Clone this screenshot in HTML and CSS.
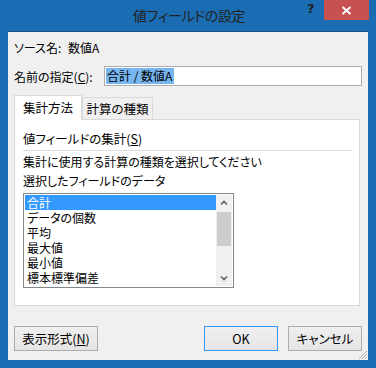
FILE: index.html
```html
<!DOCTYPE html>
<html lang="ja">

<head>
    <meta charset="UTF-8">
    <title>値フィールドの設定</title>
    <link rel="stylesheet" href="styles.css">
</head>

<body>
    <div class="window">
        <div class="titlebar">
            <span class="title">値フィールドの設定</span>
            <span class="help">?</span>
            <span class="close">
                <svg width="11" height="9" viewBox="0 0 11 9">
                    <path d="M1.5 1 L9.5 8 M9.5 1 L1.5 8" stroke="#fff" stroke-width="2"/>
                </svg>
            </span>
        </div>

        <div class="client">
            <div class="source-row">
                <span class="source-label">ソース名:</span>
                <span>数値A</span>
            </div>

            <div class="name-row">
                <label class="name-label" for="customName">名前の指定(<u>C</u>):</label>
                <div class="name-input" id="customName"><span class="sel">合計 / 数値A</span></div>
            </div>

            <div class="tabs">
                <div class="tab active">集計方法</div>
                <div class="tab">計算の種類</div>
            </div>

            <div class="panel">
                <div class="group-title">値フィールドの集計(<u>S</u>)</div>
                <div class="separator"></div>
                <div class="hint">集計に使用する計算の種類を選択してください</div>
                <div class="hint">選択したフィールドのデータ</div>

                <div class="listbox">
                    <ul class="items">
                        <li class="selected">合計</li>
                        <li>データの個数</li>
                        <li>平均</li>
                        <li>最大値</li>
                        <li>最小値</li>
                        <li>標本標準偏差</li>
                    </ul>
                    <div class="scrollbar">
                        <svg class="arrow" width="16" height="16" viewBox="0 0 16 16">
                            <path d="M5 9.5 L8 6.5 L11 9.5" fill="none" stroke="#606060" stroke-width="1.6"/>
                        </svg>
                        <div class="track">
                            <div class="thumb"></div>
                        </div>
                        <svg class="arrow" width="16" height="16" viewBox="0 0 16 16">
                            <path d="M5 6.5 L8 9.5 L11 6.5" fill="none" stroke="#606060" stroke-width="1.6"/>
                        </svg>
                    </div>
                </div>
            </div>

            <div class="buttons">
                <button class="btn">表示形式(<u>N</u>)</button>
                <div class="spacer"></div>
                <button class="btn default">OK</button>
                <button class="btn">キャンセル</button>
            </div>

            <svg class="grip" width="10" height="10" viewBox="0 0 10 10">
                <path d="M9 1 L1 9 M9 4 L4 9 M9 7 L7 9" stroke="#b0b0b0" stroke-width="1"/>
            </svg>
        </div>
    </div>
</body>

</html>
```

FILE: styles.css
```css
body {
    margin: 0;
    padding: 0;
    font-family: "Noto Sans CJK JP", "Noto Sans", sans-serif;
    font-size: 12px;
    font-feature-settings: "palt";
    color: #000;
}

.window {
    width: 376px;
    height: 368px;
    background-color: #1b6db3;
    overflow: hidden;
}

.titlebar {
    height: 31px;
    display: flex;
    align-items: flex-start;
}

.title {
    margin-left: 133px;
    margin-top: 5px;
    width: 160px;
    font-size: 14px;
    color: #222;
    letter-spacing: -0.4px;
}

.help {
    margin-left: 14px;
    margin-top: 1px;
    width: 17px;
    font-family: "DejaVu Sans", sans-serif;
    font-size: 13px;
    font-weight: bold;
    color: #222;
}

.close {
    width: 45px;
    height: 20px;
    background-color: #c75050;
    display: flex;
    align-items: center;
    justify-content: center;
}

.client {
    position: relative;
    margin-left: 8px;
    width: 360px;
    height: 329px;
    box-sizing: border-box;
    border-top: 1px solid #15558c;
    background-color: #f0f0f0;
    padding: 7px 6px 0 6px;
}

.source-row {
    height: 18px;
    line-height: 18px;
    display: flex;
}

.source-label {
    width: 54px;
}

.name-row {
    margin-top: 9px;
    display: flex;
    align-items: center;
    height: 20px;
}

.name-label {
    width: 90px;
}

.name-input {
    width: 258px;
    height: 20px;
    box-sizing: border-box;
    border: 1px solid #abadb3;
    background-color: #fff;
    padding: 1px 1px;
    line-height: 16px;
}

.sel {
    display: inline-block;
    background-color: #78b6f0;
    padding: 0 2px 0 1px;
}

.tabs {
    margin-top: 9px;
    display: flex;
    align-items: flex-end;
    height: 24px;
    position: relative;
    z-index: 1;
}

.tab {
    width: 71px;
    height: 22px;
    box-sizing: border-box;
    border: 1px solid #d9d9d9;
    border-bottom: none;
    background-color: #f0f0f0;
    text-align: center;
    line-height: 22px;
    font-size: 12.5px;
}

.tab.active {
    width: 68px;
    height: 25px;
    margin-bottom: -1px;
    background-color: #fff;
    border-color: #d9d9d9;
    line-height: 24px;
}

.panel {
    width: 346px;
    height: 187px;
    box-sizing: border-box;
    border: 1px solid #d9d9d9;
    background-color: #fff;
    padding: 10px 7px 0 8px;
}

.group-title {
    line-height: 17px;
    height: 17px;
    font-size: 12.5px;
}

.separator {
    margin-top: 3px;
    height: 1px;
    background-color: #dcdcdc;
}

.hint {
    margin-top: 2px;
    line-height: 17px;
    height: 17px;
}

.hint + .hint {
    margin-top: 2px;
}

.listbox {
    margin-top: 4px;
    width: 211px;
    height: 95px;
    box-sizing: border-box;
    border: 1px solid #828790;
    background-color: #fff;
    display: flex;
    padding: 1px;
}

.items {
    list-style: none;
    margin: 0;
    padding: 0;
    flex: 1;
}

.items li {
    height: 15px;
    line-height: 15px;
    padding-left: 2px;
    font-size: 12px;
}

.items li.selected {
    background-color: #3399ff;
    color: #fff;
}

.scrollbar {
    width: 16px;
    display: flex;
    flex-direction: column;
    background-color: #f0f0f0;
}

.arrow {
    display: block;
}

.track {
    flex: 1;
}

.thumb {
    height: 34px;
    margin: 1px 1px 0 1px;
    background-color: #cdcdcd;
}

.buttons {
    margin-top: 20px;
    display: flex;
    gap: 10px;
}

.spacer {
    flex: 1;
}

.btn {
    width: 74px;
    height: 25px;
    padding: 0;
    font-family: inherit;
    font-size: 12.5px;
    font-feature-settings: "palt";
    color: #000;
    background: linear-gradient(#efefef, #e5e5e5);
    border: 1px solid #acacac;
    border-radius: 0;
}

.btn:first-child {
    width: 84px;
}

.btn.default {
    border-color: #3399ff;
}

.grip {
    position: absolute;
    right: 0;
    bottom: 0;
}
```
